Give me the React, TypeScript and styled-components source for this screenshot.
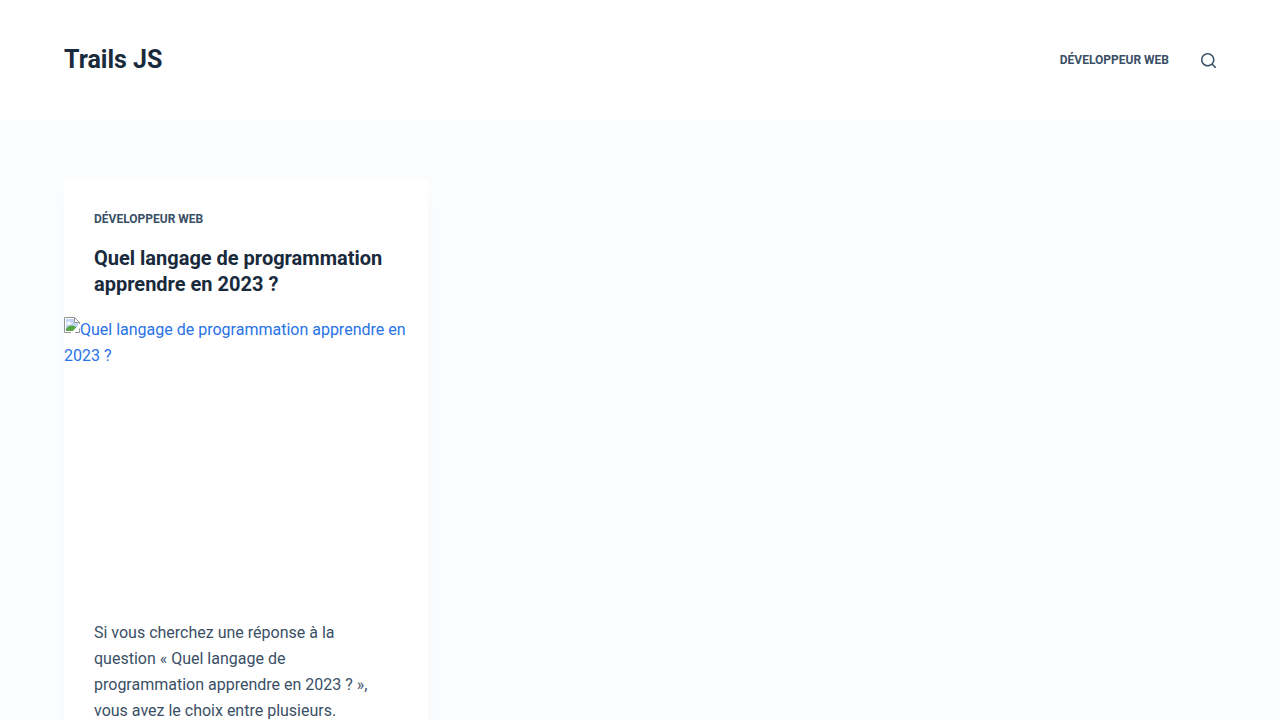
import React from "react";
import styled, { createGlobalStyle } from "styled-components";

const GlobalStyle = createGlobalStyle`
  *, *::before, *::after { box-sizing: border-box; }
  body {
    margin: 0;
    background: #fafcfe;
    color: #3a4f66;
    font-family: Roboto, "Liberation Sans", sans-serif;
    font-size: 16px;
    line-height: 26px;
  }
  h2, p { margin: 0; }
  a { text-decoration: none; }
`;

const Container = styled.div`
  max-width: 1290px;
  margin: 0 auto;
  padding: 0 5%;
`;

const Header = styled.header`
  background: #ffffff;
`;

const HeaderRow = styled(Container)`
  display: flex;
  align-items: center;
  justify-content: space-between;
  min-height: 120px;
`;

const SiteTitle = styled.a`
  color: #192a3d;
  font-size: 25px;
  font-weight: 700;
  line-height: 38px;
`;

const HeaderActions = styled.div`
  display: flex;
  align-items: center;
  gap: 32px;
`;

const CategoryLink = styled.a`
  display: block;
  color: #3a4f66;
  font-size: 12px;
  font-weight: 700;
  line-height: 18px;
  text-transform: uppercase;
`;

const SearchButton = styled.button`
  display: flex;
  padding: 0;
  border: 0;
  background: none;
  color: #3a4f66;
  cursor: pointer;
`;

const Main = styled(Container).attrs({ as: "main" })`
  display: grid;
  grid-template-columns: repeat(3, 1fr);
  gap: 30px;
  padding-top: 60px;
  padding-bottom: 60px;
`;

const Card = styled.article`
  display: flex;
  flex-direction: column;
  padding: 30px;
  background: #ffffff;
  box-shadow: 0 12px 18px -6px rgba(34, 56, 101, 0.04);
`;

const CardTitle = styled.h2`
  margin: 17px 0 20px;
  font-size: 20px;
  font-weight: 700;
  line-height: 26px;

  a { color: #192a3d; }
`;

const MediaLink = styled.a`
  display: block;
  margin: 0 -30px 30px;
  aspect-ratio: 4 / 3;
  color: #2872e8;
`;

const BrokenIcon = styled.svg`
  float: left;
`;

const Excerpt = styled.p`
  line-height: 26px;
`;

const MissingImage = () => (
  <BrokenIcon width="16" height="16" viewBox="0 0 16 16" aria-hidden="true">
    <path d="M.5.5h10l5 5v10H.5z" fill="#fff" />
    <path d="M2 2h8v4h4v4l-4 4H2z" fill="#bfd6f6" />
    <path d="M3 7.500c-1-.2-1-1.700.3-1.800.3-1.700 2.700-1.700 3.100-.2 1.500-.1 1.600 2 .1 2z" fill="#fff" />
    <path d="M2 14v-2c1.500-2.500 4-4 6.500-3.500 1.500.2 3 1 4 2L9 14z" fill="#55a545" />
    <path d="M15.500 7 7.500 15.500H11l4.500-4.500z" fill="#fff" />
    <path d="M7 15.500H.5V.5h10l5 5V7M15.500 11.500v4H11M10.500.5v5h5" fill="none" stroke="#949494" />
  </BrokenIcon>
);

export default function App() {
  return (
    <>
      <GlobalStyle />
      <Header>
        <HeaderRow>
          <SiteTitle href="#">Trails JS</SiteTitle>
          <HeaderActions>
            <nav>
              <CategoryLink href="#">Développeur web</CategoryLink>
            </nav>
            <SearchButton aria-label="Rechercher">
              <svg width="15" height="15" viewBox="0 0 15 15" fill="currentColor" aria-hidden="true">
                <path d="M14.8 13.7 12 11c.9-1.2 1.5-2.6 1.5-4.2 0-3.7-3-6.8-6.8-6.8S0 3 0 6.8s3 6.8 6.8 6.8c1.6 0 3.1-.6 4.2-1.5l2.8 2.8c.1.1.3.2.5.2s.4-.1.5-.2c.3-.4.3-.9 0-1.2zM1.5 6.8c0-2.9 2.4-5.2 5.2-5.2S12 3.9 12 6.8 9.6 12 6.8 12 1.5 9.6 1.5 6.8z" />
              </svg>
            </SearchButton>
          </HeaderActions>
        </HeaderRow>
      </Header>
      <Main>
        <Card>
          <CategoryLink href="#">Développeur web</CategoryLink>
          <CardTitle>
            <a href="#">Quel langage de programmation apprendre en 2023 ?</a>
          </CardTitle>
          <MediaLink href="#">
            <MissingImage />
            Quel langage de programmation apprendre en 2023 ?
          </MediaLink>
          <Excerpt>
            Si vous cherchez une réponse à la question « Quel langage de programmation apprendre en
            2023 ? », vous avez le choix entre plusieurs.
          </Excerpt>
        </Card>
      </Main>
    </>
  );
}
